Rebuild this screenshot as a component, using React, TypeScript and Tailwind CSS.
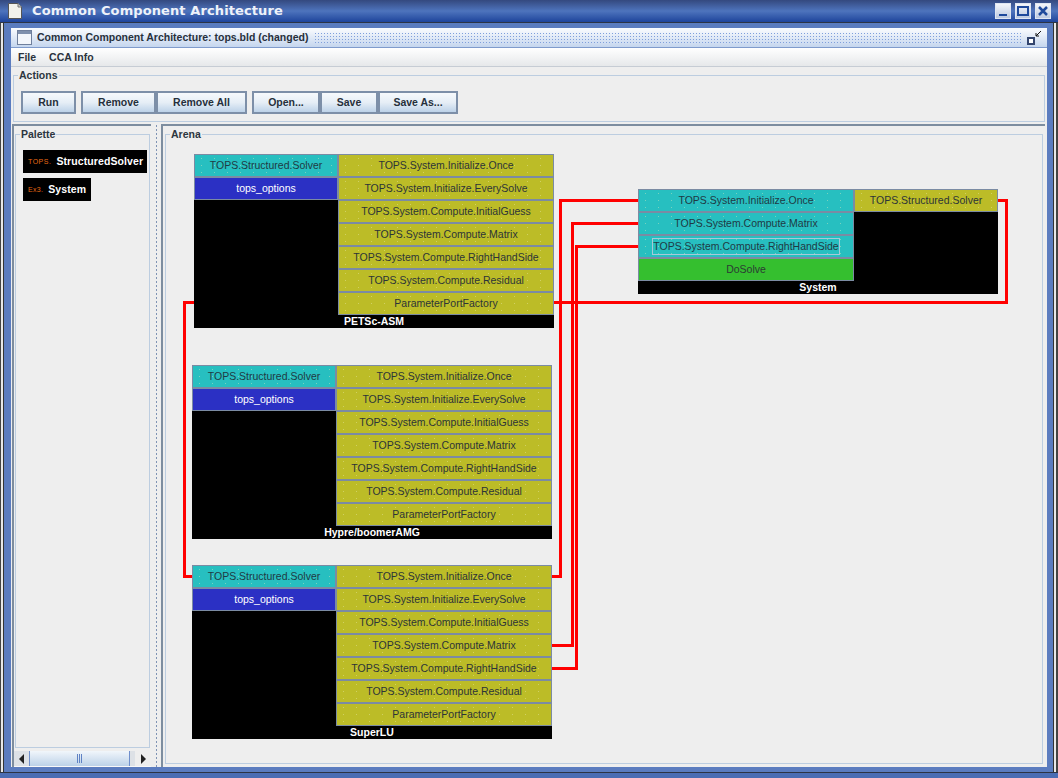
import React from "react";

const OX = 166;
const OY = 140;

type NodeProps = {
  x: number;
  y: number;
  name: string;
  left: { t: string; c: "teal" | "blue" | "green"; focus?: boolean }[];
  right: string[];
  leftW: number;
  rightW: number;
};

const speckle =
  "bg-[radial-gradient(circle,rgba(240,240,190,0.4)_0.6px,transparent_0.8px)] bg-[length:13px_7px]";

function Cell({ text, kind, width, focus }: { text: string; kind: "teal" | "blue" | "green" | "olive"; width: number; focus?: boolean }) {
  const color =
    kind === "teal"
      ? "bg-[#27bfc0] text-[#1f3a44]"
      : kind === "blue"
      ? "bg-[#2b30c4] text-white"
      : kind === "green"
      ? "bg-[#35bf2f] text-[#2c3a34]"
      : "bg-[#bcbc27] text-[#2c3438]";
  const dots = kind === "teal" || kind === "olive" ? speckle : "";
  return (
    <div
      className={`h-[23px] border border-[#7b8ba3] flex items-center justify-center whitespace-nowrap text-[10.5px] ${color} ${dots}`}
      style={{ width }}
    >
      <span className={focus ? "outline outline-1 outline-[#a8c8d8]" : ""}>{text}</span>
    </div>
  );
}

function Node({ x, y, name, left, right, leftW, rightW }: NodeProps) {
  return (
    <div className="absolute bg-black flex flex-col" style={{ left: x - OX, top: y - OY, width: leftW + rightW }}>
      <div className="flex items-start">
        <div className="flex flex-col">
          {left.map((l) => (
            <Cell key={l.t} text={l.t} kind={l.c} width={leftW} focus={l.focus} />
          ))}
        </div>
        <div className="flex flex-col">
          {right.map((r) => (
            <Cell key={r} text={r} kind="olive" width={rightW} />
          ))}
        </div>
      </div>
      <div className="h-[13px] flex items-center justify-center text-white text-[10.5px] font-bold leading-none">{name}</div>
    </div>
  );
}

const usesPorts = [
  "TOPS.System.Initialize.Once",
  "TOPS.System.Initialize.EverySolve",
  "TOPS.System.Compute.InitialGuess",
  "TOPS.System.Compute.Matrix",
  "TOPS.System.Compute.RightHandSide",
  "TOPS.System.Compute.Residual",
  "ParameterPortFactory",
];

const solverLeft: NodeProps["left"] = [
  { t: "TOPS.Structured.Solver", c: "teal" },
  { t: "tops_options", c: "blue" },
];

function Btn({ children, w, ml }: { children: React.ReactNode; w: number; ml?: string }) {
  return (
    <button
      className={`h-[23px] border-2 border-[#7d8fa8] bg-gradient-to-b from-[#f6f9fc] via-[#e6eef6] to-[#bdd2e8] text-[10.5px] font-bold text-[#26303c] flex items-center justify-center ${ml ?? ""}`}
      style={{ width: w }}
    >
      {children}
    </button>
  );
}

function WinBtn({ children }: { children: React.ReactNode }) {
  return (
    <div className="w-[16px] h-[16px] border border-[#dfe6f2] bg-gradient-to-b from-[#f4f6fa] to-[#bcc9e0] flex items-center justify-center">
      <svg width="14" height="14" viewBox="0 0 14 14" fill="none" stroke="#1f4a9c" strokeWidth="2">
        {children}
      </svg>
    </div>
  );
}

export default function App() {
  return (
    <div className="w-[1058px] h-[778px] overflow-hidden flex flex-col bg-[#5b7cbf] font-['Liberation_Sans',Arial,sans-serif]">
      {/* Outer title bar */}
      <div className="h-[23px] shrink-0 flex items-center pl-[8px] pr-[7px] bg-gradient-to-b from-[#34497f] via-[#4e74bd] to-[#1f449b] border-b border-[#2d3444]">
        <svg width="14" height="16" viewBox="0 0 14 16" className="shrink-0">
          <path d="M0.5 0.5H10L13.5 4V15.5H0.5Z" fill="#f2f2ec" stroke="#555" />
          <path d="M10 0.5V4H13.5" fill="#c8c8c0" stroke="#777" />
        </svg>
        <span className="ml-[10px] font-['DejaVu_Sans',sans-serif] text-[13px] font-bold text-[#eef2fa] tracking-[0.1px]">Common Component Architecture</span>
        <div className="ml-auto flex gap-[4px]">
          <WinBtn>
            <path d="M3 11H11" />
          </WinBtn>
          <WinBtn>
            <path d="M2 3H12V11H2Z" />
          </WinBtn>
          <WinBtn>
            <path d="M3 3L11 11M11 3L3 11" strokeWidth="2.5" />
          </WinBtn>
        </div>
      </div>

      {/* Frame */}
      <div className="flex-1 min-h-0 flex">
        <div className="w-[11px] shrink-0 flex">
          <div className="w-[1px] bg-[#444]" />
          <div className="w-[2px] bg-[#e8e8e8]" />
          <div className="w-[1px] bg-[#333]" />
          <div className="flex-1 bg-[#5b7cbf]" />
        </div>

        <div className="flex-1 min-w-0 flex flex-col pt-[5px] pb-[5px]">
          {/* Internal frame title */}
          <div className="h-[20px] shrink-0 flex items-center pl-[6px] pr-[5px] bg-gradient-to-b from-[#fbfcfe] to-[#c5d6ee] border-b border-[#7f9bcc]">
            <svg width="15" height="15" viewBox="0 0 15 15" className="shrink-0">
              <rect x="0.5" y="0.5" width="14" height="14" fill="#f3f6fb" stroke="#6f7f9c" />
              <rect x="1" y="1" width="13" height="3" fill="#7f90ad" />
            </svg>
            <span className="ml-[5px] text-[10.5px] font-bold text-[#27303c] whitespace-nowrap">
              Common Component Architecture: tops.bld (changed)
            </span>
            <div className="ml-[6px] flex-1 h-[12px] bg-[radial-gradient(circle,#7f9fdc_0.8px,transparent_1px)] bg-[length:3px_3px]" />
            <svg width="16" height="16" viewBox="0 0 16 16" className="ml-[5px] shrink-0">
              <path d="M15 1L10 6M10 3V6H13" stroke="#111" fill="none" />
              <rect x="2" y="8" width="6" height="6" fill="#fff" stroke="#33456e" strokeWidth="2" />
            </svg>
          </div>

          {/* Menu */}
          <div className="h-[19px] shrink-0 flex items-center gap-[13px] pl-[7px] pt-[1px] bg-gradient-to-b from-white to-[#e6e8ea] border-b border-[#c6ccd4] text-[10.5px] font-bold text-[#2a323c]">
            <span>File</span>
            <span>CCA Info</span>
          </div>

          {/* Body */}
          <div className="flex-1 min-h-0 flex flex-col bg-[#eeeeee]">
            <fieldset className="h-[53px] mx-[2px] shrink-0 border border-[#bccde0] mt-[2px] flex items-center">
              <legend className="ml-[4px] px-[1px] text-[10.5px] font-bold text-[#2c3640] leading-[12px]">Actions</legend>
              <div className="flex ml-[7px] mt-[10px]">
                <Btn w={55}>Run</Btn>
                <Btn w={75} ml="ml-[5px]">Remove</Btn>
                <Btn w={91}>Remove All</Btn>
                <Btn w={68} ml="ml-[5px]">Open...</Btn>
                <Btn w={58}>Save</Btn>
                <Btn w={80}>Save As...</Btn>
              </div>
            </fieldset>

            <div className="flex-1 min-h-0 flex mt-[2px] pl-[1px] pr-[2px]">
              {/* Palette */}
              <div className="w-[139px] shrink-0 flex flex-col border-2 border-[#7d8d9f] border-b-0 border-r-0 pt-[2px]">
                <fieldset className="flex-1 min-h-0 mx-[1px] border border-[#bccde0] flex flex-col gap-[5px] pl-[7px] pt-[10px]">
                  <legend className="-ml-[3px] px-[1px] text-[10.5px] font-bold text-[#2c3640] leading-[12px]">Palette</legend>
                  <div className="w-[124px] h-[23px] bg-black flex items-center pl-[5px] gap-[5px] shrink-0">
                    <span className="text-[7px] text-[#e86a14] leading-none tracking-[0.5px]">TOPS.</span>
                    <span className="text-[10.5px] font-bold text-white tracking-[0.1px]">StructuredSolver</span>
                  </div>
                  <div className="w-[68px] h-[23px] bg-black flex items-center pl-[5px] gap-[5px] shrink-0">
                    <span className="text-[7px] text-[#e86a14] leading-none tracking-[0.3px]">Ex3.</span>
                    <span className="text-[10.5px] font-bold text-white tracking-[0.1px]">System</span>
                  </div>
                </fieldset>
                <div className="h-[16px] shrink-0 mt-[3px] flex items-stretch bg-[#dde1e6] border-b border-[#f8f8f8]">
                  <div className="w-[15px] flex items-center justify-center">
                    <div className="w-0 h-0 border-y-[5px] border-y-transparent border-r-[5px] border-r-[#222]" />
                  </div>
                  <div className="w-[101px] border-x border-[#6f8fcc] bg-gradient-to-b from-[#f1f6fb] to-[#bcd2e8] flex items-center justify-center gap-[1px]">
                    <div className="w-[1px] h-[9px] bg-[#5f82c4]" />
                    <div className="w-[1px] h-[9px] bg-[#5f82c4]" />
                    <div className="w-[1px] h-[9px] bg-[#5f82c4]" />
                  </div>
                  <div className="flex-1" />
                  <div className="w-[16px] bg-[#eeeeee] flex items-center justify-center">
                    <div className="w-0 h-0 border-y-[5px] border-y-transparent border-l-[5px] border-l-[#222]" />
                  </div>
                </div>
              </div>

              {/* Splitter */}
              <div className="w-[10px] shrink-0 flex justify-center">
                <div className="w-[3px] bg-[radial-gradient(circle,#7f93b4_0.7px,transparent_0.9px)] bg-[length:3px_4px]" />
              </div>

              {/* Arena */}
              <div className="flex-1 min-w-0 flex border-2 border-[#7d8d9f] border-b-0 border-r-0 pl-[2px] pr-[2px] pb-[3px] pt-[2px]">
                <fieldset className="flex-1 min-w-0 border border-[#bccde0]">
                  <legend className="ml-[4px] px-[1px] text-[10.5px] font-bold text-[#2c3640] leading-[12px]">Arena</legend>
                  <div className="relative w-full h-full">
                    <Node x={194} y={154} name="PETSc-ASM" left={solverLeft} right={usesPorts} leftW={144} rightW={216} />
                    <Node x={192} y={365} name="Hypre/boomerAMG" left={solverLeft} right={usesPorts} leftW={144} rightW={216} />
                    <Node x={192} y={565} name="SuperLU" left={solverLeft} right={usesPorts} leftW={144} rightW={216} />
                    <Node
                      x={638}
                      y={189}
                      name="System"
                      left={[
                        { t: "TOPS.System.Initialize.Once", c: "teal" },
                        { t: "TOPS.System.Compute.Matrix", c: "teal" },
                        { t: "TOPS.System.Compute.RightHandSide", c: "teal", focus: true },
                        { t: "DoSolve", c: "green" },
                      ]}
                      right={["TOPS.Structured.Solver"]}
                      leftW={216}
                      rightW={144}
                    />
                    {/* Wires */}
                    <svg
                      className="absolute pointer-events-none overflow-visible"
                      style={{ left: -OX, top: -OY }}
                      width="1058"
                      height="778"
                      fill="none"
                      stroke="#ff0000"
                      strokeWidth="3"
                    >
                      <path d="M554 302.5H1006.5V200.5H998" />
                      <path d="M194 302.5H184.5V576.5H192" />
                      <path d="M552 576.5H560.5V200.5H638" />
                      <path d="M552 645.5H572.5V223.5H638" />
                      <path d="M552 668.5H576.5V246.5H638" />
                    </svg>
                  </div>
                </fieldset>
              </div>
            </div>
          </div>
        </div>

        <div className="w-[11px] shrink-0 flex">
          <div className="w-[6px] bg-[#5b7cbf]" />
          <div className="w-[1px] bg-[#333]" />
          <div className="w-[2px] bg-[#e8e8e8]" />
          <div className="flex-1 bg-[#444]" />
        </div>
      </div>
      <div className="h-[6px] shrink-0 bg-[#4b6db3] border-t border-[#2d3444]" />
    </div>
  );
}
